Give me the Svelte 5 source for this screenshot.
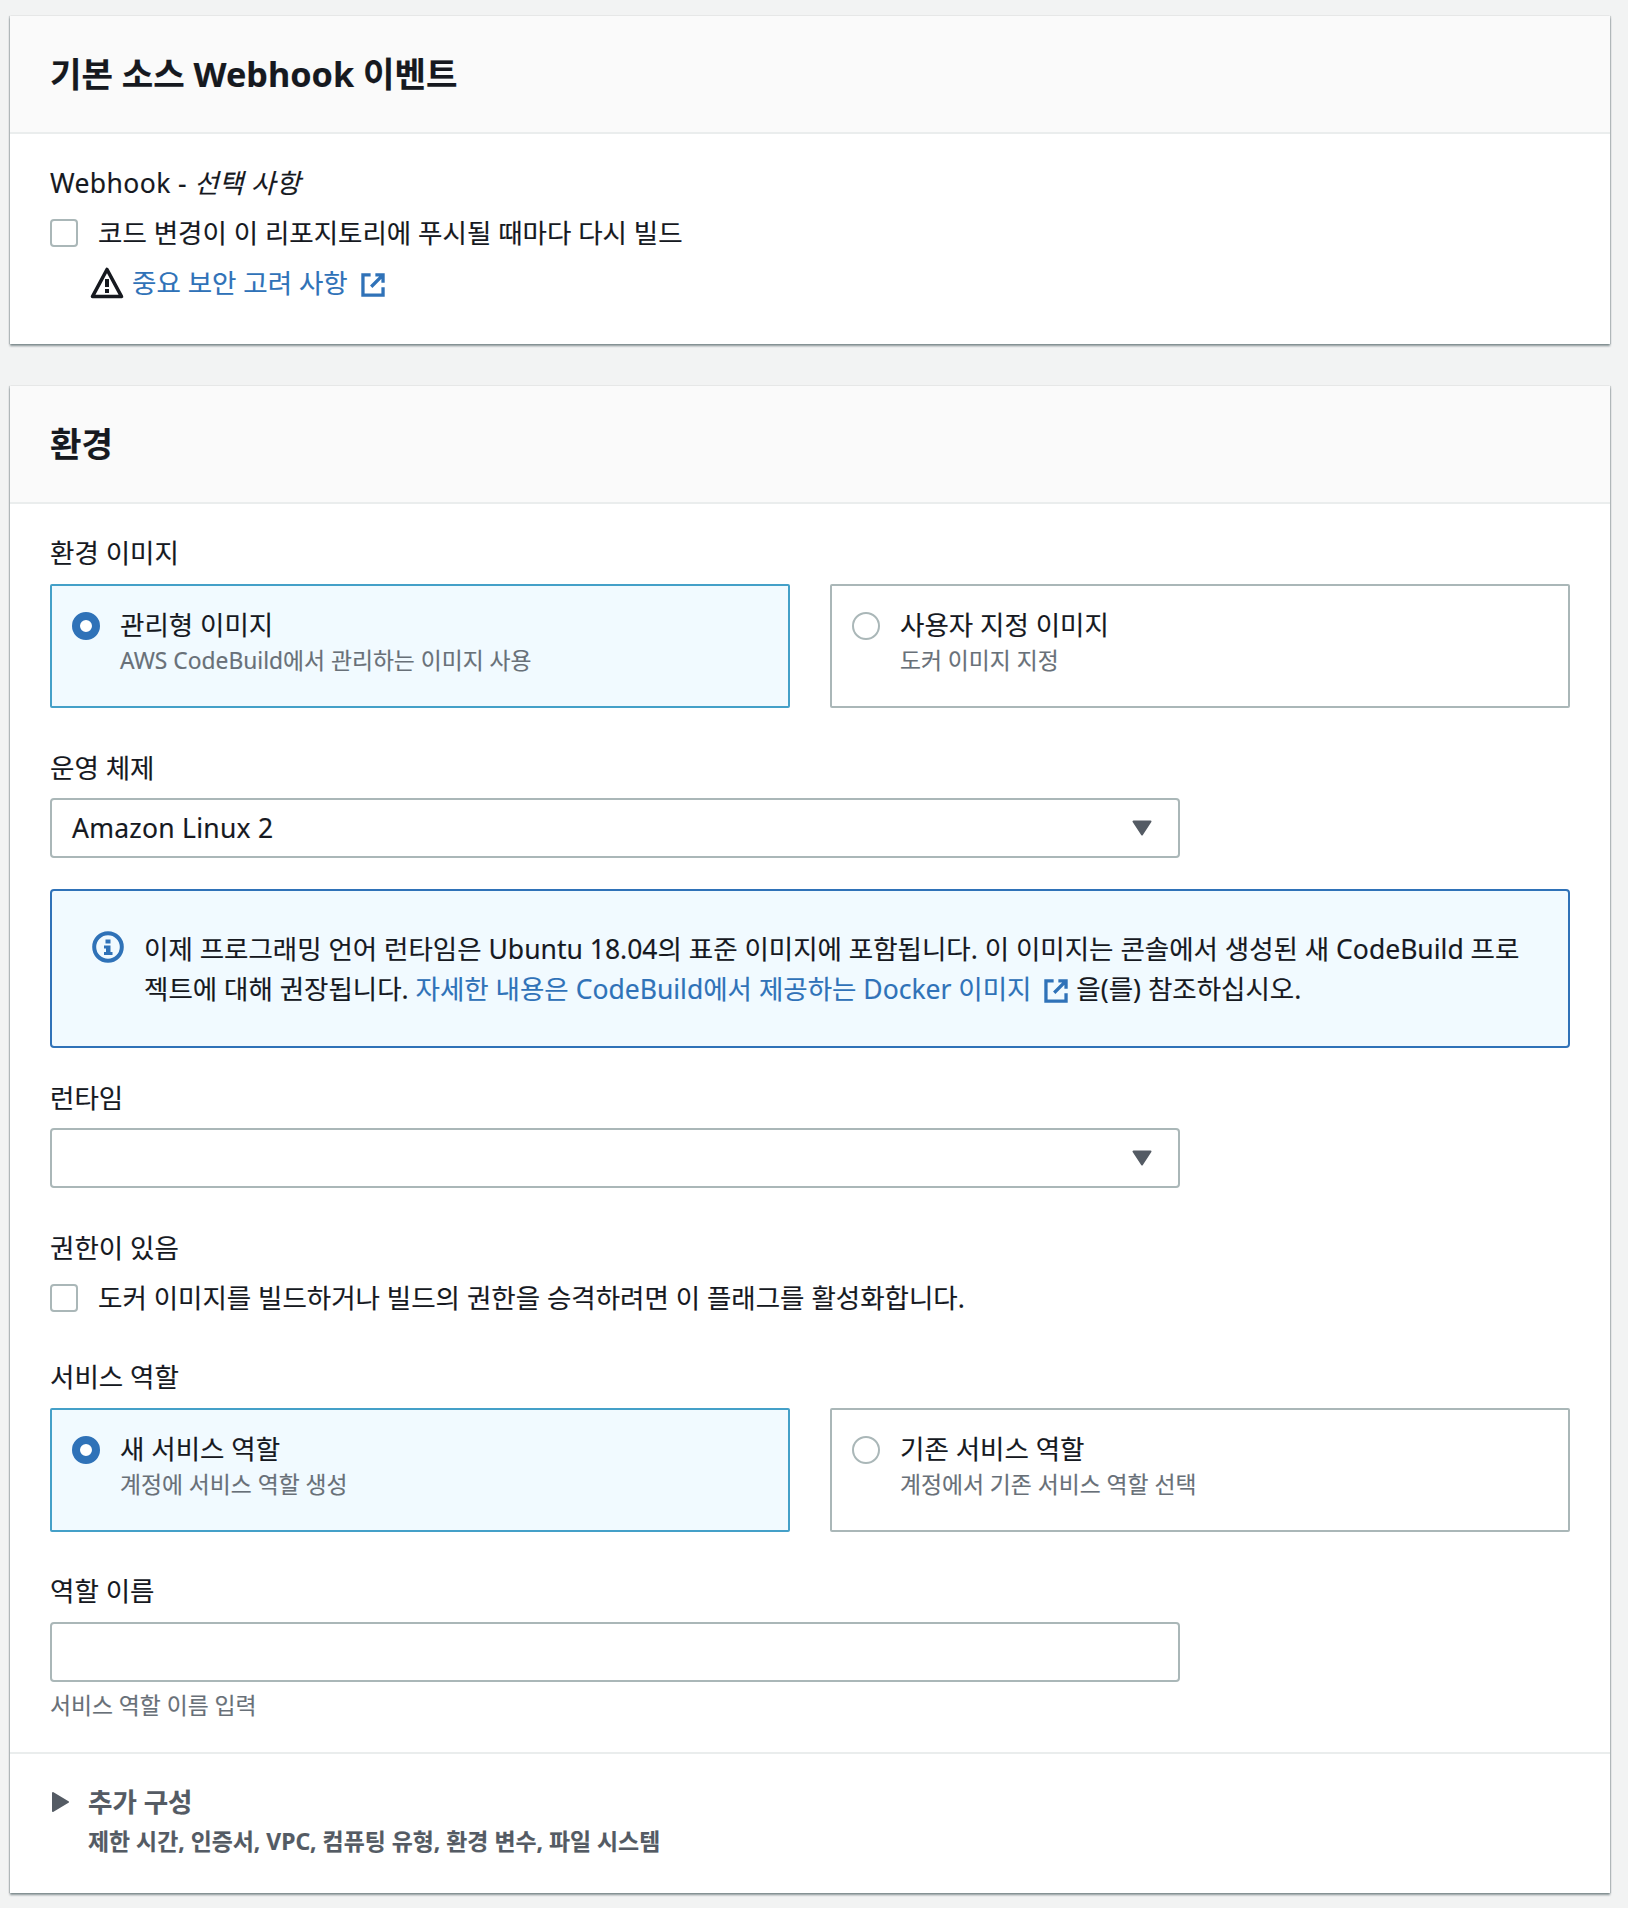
<script>
  const ext = "M9 2.500H2.500v17h17V13M13 2.500h6.500V9M19.500 2.500L9.500 12.500";
</script>

<div class="page">
  <section class="card">
    <header class="head"><h2>기본 소스 Webhook 이벤트</h2></header>
    <div class="body hook">
      <div class="label wh">Webhook - <i>선택 사항</i></div>
      <label class="check"><span class="box"></span>코드 변경이 이 리포지토리에 푸시될 때마다 다시 빌드</label>
      <div class="warn">
        <svg width="34" height="34" viewBox="0 0 34 34"><path d="M17 3.500 L31.500 30.500 H2.500 Z" fill="none" stroke="#16191f" stroke-width="3.600" stroke-linejoin="round"/><rect x="15" y="13" width="4" height="8" fill="#16191f"/><rect x="15" y="23" width="4" height="4" fill="#16191f"/></svg>
        <a href="#a">중요 보안 고려 사항<svg class="ext" width="26" height="26" viewBox="0 0 22 22"><path d={ext} fill="none" stroke="#2f72b8" stroke-width="2.800"/></svg></a>
      </div>
    </div>
  </section>

  <section class="card second">
    <header class="head"><h2>환경</h2></header>
    <div class="body env">
      <div class="field">
        <div class="label">환경 이미지</div>
        <div class="tiles">
          <div class="tile on"><span class="radio on"></span><div><div class="t">관리형 이미지</div><div class="d">AWS CodeBuild에서 관리하는 이미지 사용</div></div></div>
          <div class="tile"><span class="radio"></span><div><div class="t">사용자 지정 이미지</div><div class="d">도커 이미지 지정</div></div></div>
        </div>
      </div>
      <div class="field os">
        <div class="label">운영 체제</div>
        <div class="select">Amazon Linux 2<svg class="caret" width="22" height="18" viewBox="0 0 22 18"><path d="M2.500 2.500H19.500L11 15.500Z" fill="#545b64" stroke="#545b64" stroke-width="2" stroke-linejoin="round"/></svg></div>
      </div>
      <div class="alert">
        <svg class="info" width="32" height="32" viewBox="0 0 32 32"><circle cx="16" cy="16" r="13.800" fill="none" stroke="#2f72b8" stroke-width="4"/><rect x="13.500" y="8.500" width="5" height="4" fill="#2f72b8"/><path d="M12 14.500h6.500v6.500h2v3h-8.500v-3h2v-3.500h-2z" fill="#2f72b8"/></svg>
        <p>이제 프로그래밍 언어 런타임은 Ubuntu 18.04의 표준 이미지에 포함됩니다. 이 이미지는 콘솔에서 생성된 새 CodeBuild 프로젝트에 대해 권장됩니다. <a href="#b">자세한 내용은 CodeBuild에서 제공하는 Docker 이미지<svg class="ext" width="26" height="26" viewBox="0 0 22 22"><path d={ext} fill="none" stroke="#2f72b8" stroke-width="2.800"/></svg></a> 을(를) 참조하십시오.</p>
      </div>
      <div class="field">
        <div class="label">런타임</div>
        <div class="select"><svg class="caret" width="22" height="18" viewBox="0 0 22 18"><path d="M2.500 2.500H19.500L11 15.500Z" fill="#545b64" stroke="#545b64" stroke-width="2" stroke-linejoin="round"/></svg></div>
      </div>
      <div class="field priv">
        <div class="label">권한이 있음</div>
        <label class="check"><span class="box"></span>도커 이미지를 빌드하거나 빌드의 권한을 승격하려면 이 플래그를 활성화합니다.</label>
      </div>
      <div class="field svc">
        <div class="label">서비스 역할</div>
        <div class="tiles">
          <div class="tile on"><span class="radio on"></span><div><div class="t">새 서비스 역할</div><div class="d">계정에 서비스 역할 생성</div></div></div>
          <div class="tile"><span class="radio"></span><div><div class="t">기존 서비스 역할</div><div class="d">계정에서 기존 서비스 역할 선택</div></div></div>
        </div>
      </div>
      <div class="field last">
        <div class="label">역할 이름</div>
        <div class="select"></div>
        <div class="hint">서비스 역할 이름 입력</div>
      </div>
    </div>
    <div class="more">
      <svg class="tri" width="20" height="22" viewBox="0 0 20 22"><path d="M3 2 L18 11 L3 20 Z" fill="#545b64" stroke="#545b64" stroke-width="2" stroke-linejoin="round"/></svg>
      <div>
        <div class="mt">추가 구성</div>
        <div class="md">제한 시간, 인증서, VPC, 컴퓨팅 유형, 환경 변수, 파일 시스템</div>
      </div>
    </div>
  </section>
</div>

<style>
  :global(body) { margin: 0; background: #f2f3f3; }
  .page { padding: 16px 18px 16px 10px; font: 26.5px/40px "Noto Sans", "Noto Sans CJK KR", sans-serif; color: #16191f; height: 1876px; -webkit-text-stroke: 0.15px currentColor; }
  .card { background: #fff; box-shadow: 0 2px 2px rgba(0,28,36,.45), -1px 0 1px rgba(0,28,36,.15), 1px 0 1px rgba(0,28,36,.15); }
  .second { margin-top: 42px; }
  .head { height: 116px; background: #fafafa; border-bottom: 2px solid #eaeded; display: flex; align-items: center; padding: 0 40px; }
  h2 { margin: 0; font-size: 34.2px; line-height: 44px; font-weight: 700; }
  .hook { padding: 29px 40px 0; height: 181px; }
  .hook .label { margin-bottom: 10px; }
  .wh { letter-spacing: .4px; }
  .env { padding: 29px 40px 0 40px; }
  .label { line-height: 40px; }
  .check { display: flex; align-items: center; height: 40px; }
  .box { width: 24px; height: 24px; border: 2px solid #aab7b8; border-radius: 4px; margin-right: 20px; background: #fff; }
  .warn { display: flex; align-items: center; margin: 10px 0 0 40px; height: 40px; gap: 8px; }
  a { color: #2f72b8; text-decoration: none; }
  .ext { vertical-align: -5px; margin-left: 12px; }
  .field { margin-bottom: 40px; }
  .field.os { margin-bottom: 31px; }
  .field.priv, .field.svc { margin-bottom: 39px; }
  .field.last { margin-bottom: 0; }
  .tiles { display: grid; grid-template-columns: 1fr 1fr; gap: 40px; margin-top: 11px; }
  .tile { height: 124px; box-sizing: border-box; border: 2px solid #aab7b8; padding: 19px 20px; display: flex; gap: 20px; border-radius: 2px; }
  .tile.on { border-color: #44a0c8; background: #f1faff; }
  .radio { width: 28px; height: 28px; box-sizing: border-box; border-radius: 50%; border: 2px solid #aab7b8; margin-top: 7px; background: #fff; flex: none; }
  .radio.on { border: 8px solid #2f72b8; }
  .t { line-height: 40px; }
  .d { font-size: 22.8px; line-height: 32px; color: #687078; }
  .select { position: relative; height: 60px; box-sizing: border-box; width: 1130px; margin-top: 10px; border: 2px solid #aab7b8; border-radius: 4px; padding: 0 20px; line-height: 56px; letter-spacing: .25px; }
  .last .select { margin-top: 11px; }
  .caret { position: absolute; right: 25px; top: 19px; }
  .alert { display: flex; gap: 20px; box-sizing: border-box; height: 159px; border: 2px solid #2f72b8; border-radius: 4px; background: #f1faff; padding: 38px 40px; margin-bottom: 30px; }
  .alert p { margin: 0; }
  .info { flex: none; margin-top: 2px; }
  .priv .check { margin-top: 10px; }
  .hint { font-size: 22.8px; line-height: 32px; color: #687078; margin-top: 8px; }
  .more { border-top: 2px solid #eaeded; margin-top: 30px; padding: 28px 40px 0; height: 141px; box-sizing: border-box; display: flex; gap: 18px; }
  .tri { margin-top: 9px; flex: none; }
  .mt { font-weight: 700; color: #545b64; line-height: 40px; }
  .md { font-weight: 700; font-size: 22.9px; color: #545b64; line-height: 40px; }
</style>
